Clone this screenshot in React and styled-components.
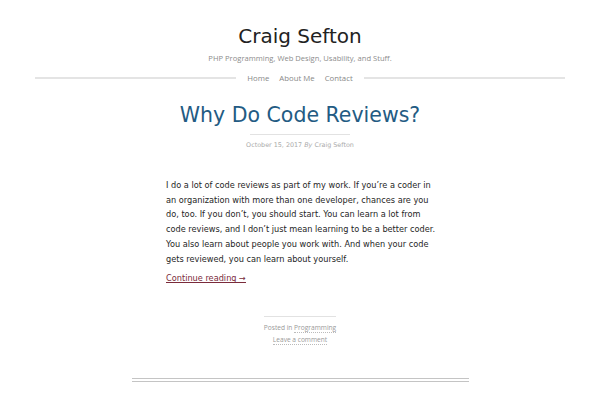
import React from "react";
import styled, { createGlobalStyle } from "styled-components";

const GlobalStyle = createGlobalStyle`
  body {
    margin: 0;
    background: #fff;
    font-family: "DejaVu Sans", sans-serif;
  }
`;

const Page = styled.div`
  display: flex;
  flex-direction: column;
  align-items: center;
  padding-top: 24px;
`;

const SiteTitle = styled.h1`
  margin: 0;
  font-size: 20px;
  line-height: 24px;
  font-weight: normal;
  color: #222;
`;

const Tagline = styled.div`
  margin-top: 4px;
  font-family: "Open Sans", sans-serif;
  font-size: 7.6px;
  line-height: 12px;
  color: #8c8c8c;
`;

const NavBar = styled.nav`
  align-self: stretch;
  display: flex;
  align-items: center;
  gap: 11px;
  margin: 8px 35px 0;
  height: 12px;
`;

const NavRule = styled.div`
  flex: 1;
  height: 2px;
  background: #e4e4e4;
`;

const NavLinks = styled.div`
  display: flex;
  gap: 10px;
`;

const NavLink = styled.a`
  font-family: "Open Sans", sans-serif;
  font-size: 7.8px;
  line-height: 12px;
  color: #888;
  text-decoration: none;
`;

const Article = styled.article`
  width: 268px;
  display: flex;
  flex-direction: column;
  align-items: center;
`;

const PostTitle = styled.h2`
  margin: 18px 0 0;
  font-size: 20.5px;
  line-height: 26px;
  font-weight: normal;
  color: #235b83;
  white-space: nowrap;
`;

const Rule = styled.div`
  width: ${(p) => p.$w}px;
  height: 1px;
  background: #e2e2e2;
  margin-top: ${(p) => p.$top}px;
`;

const Meta = styled.div`
  margin-top: 5px;
  font-size: 6.4px;
  line-height: 10px;
  color: #aaa;
  em {
    font-style: italic;
  }
`;

const Body = styled.p`
  align-self: stretch;
  margin: 28px -5px 0 0;
  font-size: 8.2px;
  line-height: 14.7px;
  color: #262626;
`;

const More = styled.a`
  align-self: flex-start;
  margin-top: 5px;
  font-size: 8.2px;
  line-height: 14.7px;
  color: #7a2b3b;
  text-decoration: underline;
`;

const FootLine = styled.div`
  margin-top: ${(p) => p.$top}px;
  font-family: "Open Sans", sans-serif;
  font-size: 6.6px;
  line-height: 11px;
  color: #999;
`;

const FootLink = styled.a`
  color: #999;
  text-decoration: none;
  border-bottom: 1px dotted #bbb;
`;

const DoubleRule = styled.div`
  width: 337px;
  height: 2px;
  margin-top: 33px;
  border-top: 1px solid #c4c4c4;
  border-bottom: 1px solid #c4c4c4;
`;

export default function App() {
  return (
    <>
      <GlobalStyle />
      <Page>
        <SiteTitle>Craig Sefton</SiteTitle>
        <Tagline>PHP Programming, Web Design, Usability, and Stuff.</Tagline>
        <NavBar>
          <NavRule />
          <NavLinks>
            <NavLink>Home</NavLink>
            <NavLink>About Me</NavLink>
            <NavLink>Contact</NavLink>
          </NavLinks>
          <NavRule />
        </NavBar>
        <Article>
          <PostTitle>Why Do Code Reviews?</PostTitle>
          <Rule $w={100} $top={6} />
          <Meta>
            October 15, 2017 <em>By</em> Craig Sefton
          </Meta>
          <Body>
            I do a lot of code reviews as part of my work. If you’re a coder in
            an organization with more than one developer, chances are you do,
            too. If you don’t, you should start. You can learn a lot from code
            reviews, and I don’t just mean learning to be a better coder. You
            also learn about people you work with. And when your code gets
            reviewed, you can learn about yourself.
          </Body>
          <More>Continue reading →</More>
          <Rule $w={72} $top={30} />
          <FootLine $top={5}>
            Posted in <FootLink>Programming</FootLink>
          </FootLine>
          <FootLine $top={1}>
            <FootLink>Leave a comment</FootLink>
          </FootLine>
        </Article>
        <DoubleRule />
      </Page>
    </>
  );
}
